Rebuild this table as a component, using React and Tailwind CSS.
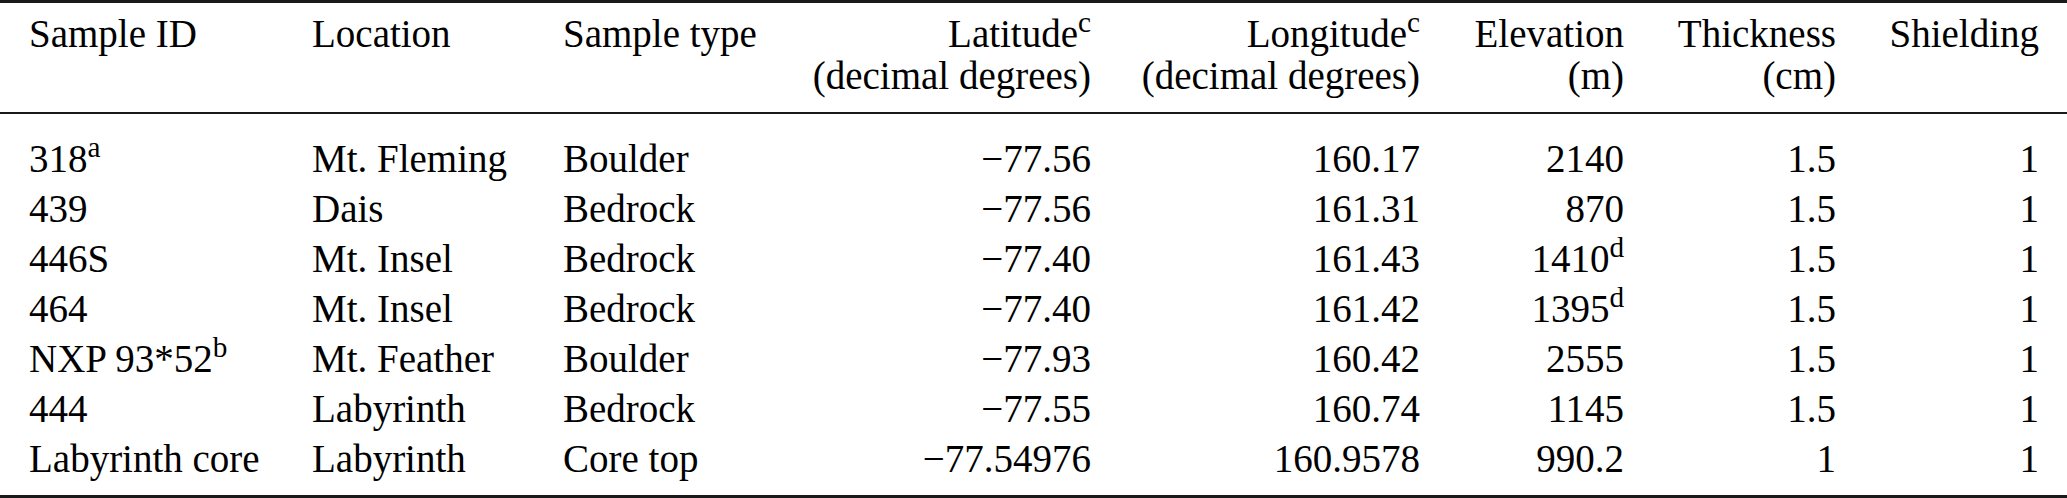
const rows = [
  { id: "318", idSup: "a", loc: "Mt. Fleming", type: "Boulder", lat: "−77.56", lon: "160.17", elev: "2140", thick: "1.5", shield: "1" },
  { id: "439", loc: "Dais", type: "Bedrock", lat: "−77.56", lon: "161.31", elev: "870", thick: "1.5", shield: "1" },
  { id: "446S", loc: "Mt. Insel", type: "Bedrock", lat: "−77.40", lon: "161.43", elev: "1410", elevSup: "d", thick: "1.5", shield: "1" },
  { id: "464", loc: "Mt. Insel", type: "Bedrock", lat: "−77.40", lon: "161.42", elev: "1395", elevSup: "d", thick: "1.5", shield: "1" },
  { id: "NXP 93*52", idSup: "b", loc: "Mt. Feather", type: "Boulder", lat: "−77.93", lon: "160.42", elev: "2555", thick: "1.5", shield: "1" },
  { id: "444", loc: "Labyrinth", type: "Bedrock", lat: "−77.55", lon: "160.74", elev: "1145", thick: "1.5", shield: "1" },
  { id: "Labyrinth core", loc: "Labyrinth", type: "Core top", lat: "−77.54976", lon: "160.9578", elev: "990.2", thick: "1", shield: "1" },
];

const cols = "grid grid-cols-[283px_251px_237px_291px_329px_204px_212px_203px] pl-[29px] pr-[28px]";

export default function App() {
  return (
    <div className="w-[2067px] h-[498px] bg-white text-black text-[39px] flex flex-col font-['Liberation_Serif','Times_New_Roman',serif]">
      <div className="border-t-[3px] border-[#1a1a1a]" />

      {/* Header */}
      <div className={`${cols} leading-[42px] pt-[10px] pb-[15px] border-b-2 border-[#1a1a1a]`}>
        <div>Sample ID</div>
        <div>Location</div>
        <div>Sample type</div>
        <div className="text-right">
          <div>Latitude<sup>c</sup></div>
          <div>(decimal degrees)</div>
        </div>
        <div className="text-right">
          <div>Longitude<sup>c</sup></div>
          <div>(decimal degrees)</div>
        </div>
        <div className="text-right">
          <div>Elevation</div>
          <div>(m)</div>
        </div>
        <div className="text-right">
          <div>Thickness</div>
          <div>(cm)</div>
        </div>
        <div className="text-right">
          <div>Shielding</div>
        </div>
      </div>

      {/* Body */}
      <div className="flex-1 pt-[20px] leading-[50px] border-b-[3px] border-[#1a1a1a]">
        {rows.map((r) => (
          <div key={r.id} className={cols}>
            <div className="whitespace-nowrap">
              {r.id}
              {r.idSup && <sup>{r.idSup}</sup>}
            </div>
            <div className="whitespace-nowrap">{r.loc}</div>
            <div className="whitespace-nowrap">{r.type}</div>
            <div className="text-right">{r.lat}</div>
            <div className="text-right">{r.lon}</div>
            <div className="text-right">
              {r.elev}
              {r.elevSup && <sup>{r.elevSup}</sup>}
            </div>
            <div className="text-right">{r.thick}</div>
            <div className="text-right">{r.shield}</div>
          </div>
        ))}
      </div>
    </div>
  );
}
